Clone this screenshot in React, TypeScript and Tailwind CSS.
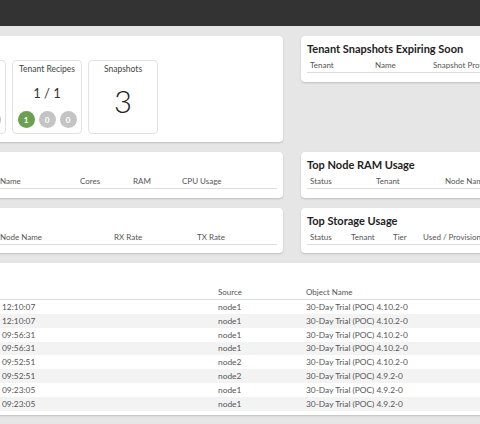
import React from "react";

const font = { fontFamily: "Lato, 'Noto Sans', sans-serif" };

function Badge({ n, green }: { n: number; green?: boolean }) {
  return (
    <div
      className={
        "w-[17px] h-[17px] rounded-full flex items-center justify-center text-white text-[8px] font-bold " +
        (green ? "bg-[#6aa151]" : "bg-[#c4c4c4]")
      }
    >
      {n}
    </div>
  );
}

function Tile({ title, children }: { title: string; children: React.ReactNode }) {
  return (
    <div className="w-[70px] h-[74px] shrink-0 border border-[#e2e2e2] rounded-[4px] flex flex-col items-center pt-[2px]">
      <div className="text-[8.5px] leading-[12px] text-[#444]">{title}</div>
      {children}
    </div>
  );
}

function CountTile({ title, value, a, b, c }: { title: string; value: string; a: number; b: number; c: number }) {
  return (
    <Tile title={title}>
      <div className="mt-[10px] text-[13px] leading-[16px] text-[#333]">{value}</div>
      <div className="mt-[10px] flex gap-[4px]">
        <Badge n={a} green={a > 0} />
        <Badge n={b} />
        <Badge n={c} />
      </div>
    </Tile>
  );
}

function TableCard({
  title,
  cols,
  className,
}: {
  title: string;
  cols: { label: string; w: string }[];
  className: string;
}) {
  return (
    <div className={"bg-white rounded-[4px] shadow-[0_1px_2px_rgba(0,0,0,0.18)] px-[6px] pt-[6px] shrink-0 " + className}>
      <div className="text-[11px] leading-[14px] font-bold text-[#222]">{title}</div>
      <div className="mt-[3px] flex border-b border-[#dcdcdc] pb-[1px]">
        {cols.map((c) => (
          <div key={c.label} className={"px-[3px] text-[8px] leading-[12px] text-[#555] whitespace-nowrap shrink-0 " + c.w}>
            {c.label}
          </div>
        ))}
      </div>
    </div>
  );
}

const events = [
  ["2023-06-12", "12:10:07", "node1", "30-Day Trial (POC) 4.10.2-0"],
  ["2023-06-12", "12:10:07", "node1", "30-Day Trial (POC) 4.10.2-0"],
  ["2023-06-12", "09:56:31", "node1", "30-Day Trial (POC) 4.10.2-0"],
  ["2023-06-12", "09:56:31", "node1", "30-Day Trial (POC) 4.10.2-0"],
  ["2023-06-12", "09:52:51", "node2", "30-Day Trial (POC) 4.10.2-0"],
  ["2023-06-12", "09:52:51", "node2", "30-Day Trial (POC) 4.9.2-0"],
  ["2023-06-12", "09:23:05", "node1", "30-Day Trial (POC) 4.9.2-0"],
  ["2023-06-12", "09:23:05", "node1", "30-Day Trial (POC) 4.9.2-0"],
];

export default function App() {
  return (
    <div className="w-[480px] h-[424px] overflow-hidden bg-[#e6e6e6]" style={font}>
      <div className="h-[26px] bg-[#333333] flex items-center overflow-hidden">
        <div className="ml-[-62px] text-white font-bold text-[12px] leading-[14px] whitespace-nowrap">Dashboard</div>
      </div>
      <div className="ml-[-300px] w-[1100px] pt-[10px] flex flex-col gap-[10px]">
        {/* Row 1 */}
        <div className="flex items-start gap-[18px]">
          <div className="w-[583px] h-[106px] shrink-0 bg-white rounded-[4px] shadow-[0_1px_2px_rgba(0,0,0,0.18)] px-[8px] pt-[6px]">
            <div className="text-[11px] leading-[14px] font-bold text-[#222]">Summary</div>
            <div className="mt-[4px] flex gap-[6px]">
              <CountTile title="Nodes" value="2 / 2" a={2} b={0} c={0} />
              <CountTile title="Tenants" value="1 / 1" a={1} b={0} c={0} />
              <CountTile title="Volumes" value="4 / 4" a={4} b={0} c={0} />
              <CountTile title="Networks" value="1 / 1" a={1} b={0} c={0} />
              <CountTile title="Tenant Recipes" value="1 / 1" a={1} b={0} c={0} />
              <Tile title="Snapshots">
                <div className="mt-[8px] text-[31px] leading-[36px] text-[#222] font-light">3</div>
              </Tile>
            </div>
          </div>
          <TableCard
            title="Tenant Snapshots Expiring Soon"
            className="w-[400px] h-[46px]"
            cols={[
              { label: "Tenant", w: "w-[65px]" },
              { label: "Name", w: "w-[58px]" },
              { label: "Snapshot Profile", w: "w-[90px]" },
              { label: "Expires", w: "w-[80px]" },
            ]}
          />
        </div>
        {/* Row 2 */}
        <div className="flex items-start gap-[18px]">
          <TableCard
            title="Top Node CPU Usage"
            className="w-[583px] h-[46px]"
            cols={[
              { label: "Status", w: "w-[120px]" },
              { label: "Tenant", w: "w-[171px]" },
              { label: "Name", w: "w-[80px]" },
              { label: "Cores", w: "w-[53px]" },
              { label: "RAM", w: "w-[49px]" },
              { label: "CPU Usage", w: "flex-1" },
            ]}
          />
          <TableCard
            title="Top Node RAM Usage"
            className="w-[400px] h-[46px]"
            cols={[
              { label: "Status", w: "w-[66px]" },
              { label: "Tenant", w: "w-[69px]" },
              { label: "Node Name", w: "w-[80px]" },
              { label: "RAM Usage", w: "w-[80px]" },
            ]}
          />
        </div>
        {/* Row 3 */}
        <div className="flex items-start gap-[18px]">
          <TableCard
            title="Top Network Usage"
            className="w-[583px] h-[45px]"
            cols={[
              { label: "Status", w: "w-[120px]" },
              { label: "Tenant", w: "w-[171px]" },
              { label: "Node Name", w: "w-[114px]" },
              { label: "RX Rate", w: "w-[83px]" },
              { label: "TX Rate", w: "flex-1" },
            ]}
          />
          <TableCard
            title="Top Storage Usage"
            className="w-[400px] h-[45px]"
            cols={[
              { label: "Status", w: "w-[41px]" },
              { label: "Tenant", w: "w-[42px]" },
              { label: "Tier", w: "w-[30px]" },
              { label: "Used / Provisioned", w: "w-[100px]" },
            ]}
          />
        </div>
        {/* Events */}
        <div className="w-[1001px] h-[152px] shrink-0 bg-white rounded-[4px] shadow-[0_1px_2px_rgba(0,0,0,0.18)] px-[6px] pt-[6px]">
          <div className="text-[11px] leading-[14px] font-bold text-[#222]">Recent Events</div>
          <div className="mt-[2px] flex border-b border-[#dcdcdc] h-[15px] items-end pb-[1px] text-[8px] leading-[12px] text-[#555]">
            <div className="w-[120px] px-[3px] shrink-0">Type</div>
            <div className="w-[389px] px-[3px] shrink-0">Time</div>
            <div className="w-[88px] px-[3px] shrink-0">Source</div>
            <div className="flex-1 px-[3px]">Object Name</div>
          </div>
          {events.map((e, i) => (
            <div
              key={i}
              className={
                "flex h-[13.85px] items-center text-[8.4px] leading-[12px] text-[#555] whitespace-nowrap " +
                (i % 2 === 1 ? "bg-[#f3f3f3]" : "bg-white")
              }
            >
              <div className="w-[120px] px-[3px] shrink-0">Info</div>
              <div className="w-[389px] shrink-0 flex">
                <span className="shrink-0 w-[173px] text-right">{e[0]}</span>
                <span className="ml-[3px]">{e[1]}</span>
              </div>
              <div className="w-[88px] px-[3px] shrink-0">{e[2]}</div>
              <div className="flex-1 px-[3px]">{e[3]}</div>
            </div>
          ))}
        </div>
      </div>
    </div>
  );
}
